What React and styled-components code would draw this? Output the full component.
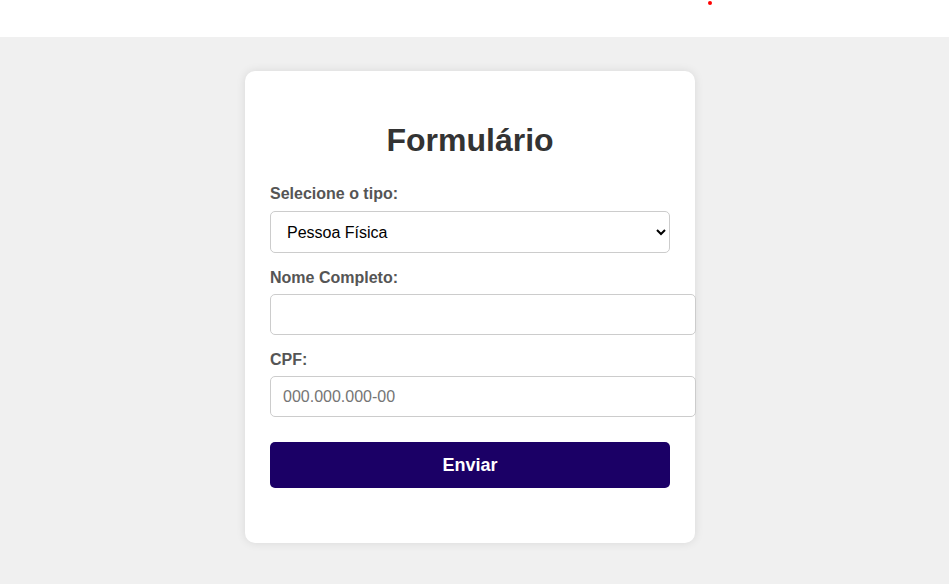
import styled, { createGlobalStyle } from 'styled-components';

const GlobalStyle = createGlobalStyle`
  * {
    box-sizing: border-box;
  }

  body {
    margin: 0;
    font-family: "Liberation Sans", Arial, sans-serif;
    background-color: #f0f0f0;
  }
`;

const TopBar = styled.header`
  position: relative;
  height: 37px;
  background-color: #ffffff;
`;

const Dot = styled.span`
  position: absolute;
  left: 708px;
  top: 1px;
  width: 4px;
  height: 4px;
  border-radius: 50%;
  background-color: #ff0000;
`;

const Page = styled.main`
  display: flex;
  justify-content: center;
  align-items: flex-start;
  min-height: calc(100vh - 37px);
  padding: 34px 9px 0 0;
  background-color: #f0f0f0;
`;

const Card = styled.form`
  width: 450px;
  padding: 25px 25px 55px;
  background-color: #ffffff;
  border-radius: 10px;
  box-shadow: 0 0 10px rgba(0, 0, 0, 0.1);
`;

const Title = styled.h1`
  margin: 26px 0 26px;
  font-size: 32px;
  font-weight: bold;
  color: #333333;
  text-align: center;
`;

const Label = styled.label`
  display: block;
  margin-bottom: 7px;
  font-size: 16px;
  font-weight: bold;
  color: #555555;
`;

const Select = styled.select`
  display: block;
  width: 100%;
  height: 42px;
  margin: 8px 0 16px;
  padding: 0 12px;
  border: 1px solid #cccccc;
  border-radius: 5px;
  background-color: #ffffff;
  font-family: "Liberation Sans", Arial, sans-serif;
  font-size: 16px;
  color: #000000;
`;

const Input = styled.input`
  display: block;
  box-sizing: content-box;
  width: 100%;
  margin: 0 0 16px;
  padding: 10px 12px;
  line-height: 19px;
  border: 1px solid #cccccc;
  border-radius: 5px;
  font-family: "Liberation Sans", Arial, sans-serif;
  font-size: 16px;
  color: #000000;

  &::placeholder {
    color: #757575;
  }
`;

const SubmitButton = styled.button`
  display: block;
  width: 100%;
  margin-top: 25px;
  padding: 12px;
  line-height: 22px;
  border: none;
  border-radius: 5px;
  background-color: #1b0066;
  color: #ffffff;
  font-family: "Liberation Sans", Arial, sans-serif;
  font-size: 18px;
  font-weight: bold;
  cursor: pointer;
`;

export default function App() {
  return (
    <>
      <GlobalStyle />
      <TopBar>
        <Dot />
      </TopBar>
      <Page>
        <Card onSubmit={(e) => e.preventDefault()}>
          <Title>Formulário</Title>
          <Label htmlFor="tipo">Selecione o tipo:</Label>
          <Select id="tipo" defaultValue="pf">
            <option value="pf">Pessoa Física</option>
            <option value="pj">Pessoa Jurídica</option>
          </Select>
          <Label htmlFor="nome">Nome Completo:</Label>
          <Input id="nome" type="text" />
          <Label htmlFor="cpf">CPF:</Label>
          <Input id="cpf" type="text" placeholder="000.000.000-00" />
          <SubmitButton type="submit">Enviar</SubmitButton>
        </Card>
      </Page>
    </>
  );
}
